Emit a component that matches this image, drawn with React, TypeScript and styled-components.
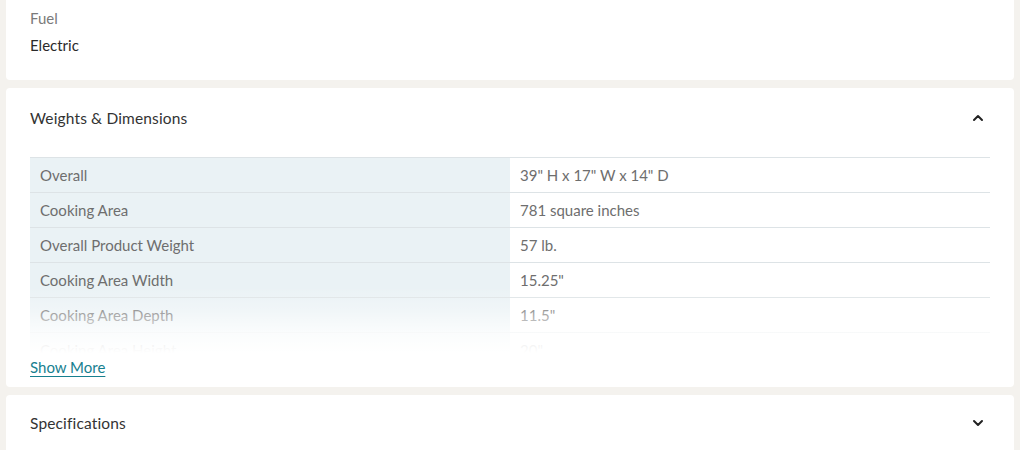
import React from "react";
import styled, { createGlobalStyle } from "styled-components";

const Global = createGlobalStyle`
  html, body { margin: 0; padding: 0; background: #f4f2ee; }
  body { font-family: "Lato", "Liberation Sans", sans-serif; -webkit-font-smoothing: antialiased; }
`;

const Page = styled.div`
  display: flex;
  flex-direction: column;
  gap: 8px;
  padding: 0 6px;
  height: 450px;
  overflow: hidden;
`;

const Card = styled.section<{ $top?: number; $bottom?: number }>`
  background: #ffffff;
  border-radius: 4px;
  padding: ${(p) => p.$top ?? 20}px 24px ${(p) => p.$bottom ?? 20}px;
  flex-shrink: 0;
`;

const FirstCard = styled(Card)`
  border-radius: 0 0 4px 4px;
`;

const FieldLabel = styled.div`
  font-size: 15px;
  line-height: 22px;
  color: #7a7a7a;
`;

const FieldValue = styled.div`
  font-size: 15px;
  line-height: 22px;
  color: #2a2a2a;
  margin-top: 5px;
`;

const Header = styled.div`
  display: flex;
  align-items: center;
  justify-content: space-between;
  height: 20px;
`;

const Title = styled.h3`
  margin: 0;
  font-size: 15.5px;
  font-weight: 400;
  color: #333333;
  letter-spacing: 0.15px;
`;

const Chevron = styled.svg`
  width: 12px;
  height: 12px;
  margin-right: 6px;
`;

const TableWrap = styled.div`
  position: relative;
  margin-top: 29px;
  height: 196px;
  overflow: hidden;
`;

const Table = styled.div`
  display: grid;
  grid-template-columns: 480px 1fr;
  border-top: 1px solid #dde3e6;
`;

const Cell = styled.div<{ $label?: boolean }>`
  height: 34px;
  display: flex;
  align-items: center;
  padding-left: 10px;
  font-size: 15px;
  color: #6e6e6e;
  background: ${(p) => (p.$label ? "#eaf2f5" : "#ffffff")};
  border-bottom: 1px solid #dde3e6;
`;

const Fade = styled.div`
  position: absolute;
  left: 0;
  right: 0;
  bottom: 0;
  height: 66px;
  background: linear-gradient(
    to bottom,
    rgba(255, 255, 255, 0) 0%,
    rgba(255, 255, 255, 0.3) 35%,
    rgba(255, 255, 255, 0.78) 68%,
    #ffffff 100%
  );
`;

const ShowMore = styled.a`
  display: inline-block;
  margin-top: 4px;
  font-size: 15px;
  line-height: 20px;
  color: #17808f;
  text-decoration: underline;
  text-underline-offset: 3px;
  cursor: pointer;
`;

const rows: [string, string][] = [
  ["Overall", '39" H x 17" W x 14" D'],
  ["Cooking Area", "781 square inches"],
  ["Overall Product Weight", "57 lb."],
  ["Cooking Area Width", '15.25"'],
  ["Cooking Area Depth", '11.5"'],
  ["Cooking Area Height", '20"'],
];

const Up = () => (
  <Chevron viewBox="0 0 12 12">
    <path d="M2 8 L6 4 L10 8" fill="none" stroke="#222" strokeWidth="2" strokeLinecap="round" strokeLinejoin="round" />
  </Chevron>
);
const Down = () => (
  <Chevron viewBox="0 0 12 12">
    <path d="M2 4 L6 8 L10 4" fill="none" stroke="#222" strokeWidth="2" strokeLinecap="round" strokeLinejoin="round" />
  </Chevron>
);

export default function App() {
  return (
    <>
      <Global />
      <Page>
        <FirstCard $top={7} $bottom={24}>
          <FieldLabel>Fuel</FieldLabel>
          <FieldValue>Electric</FieldValue>
        </FirstCard>
        <Card $top={20} $bottom={10}>
          <Header>
            <Title>Weights &amp; Dimensions</Title>
            <Up />
          </Header>
          <TableWrap>
            <Table>
              {rows.map(([k, v]) => (
                <React.Fragment key={k}>
                  <Cell $label>{k}</Cell>
                  <Cell>{v}</Cell>
                </React.Fragment>
              ))}
            </Table>
            <Fade />
          </TableWrap>
          <ShowMore>Show More</ShowMore>
        </Card>
        <Card $top={18}>
          <Header>
            <Title>Specifications</Title>
            <Down />
          </Header>
        </Card>
      </Page>
    </>
  );
}
